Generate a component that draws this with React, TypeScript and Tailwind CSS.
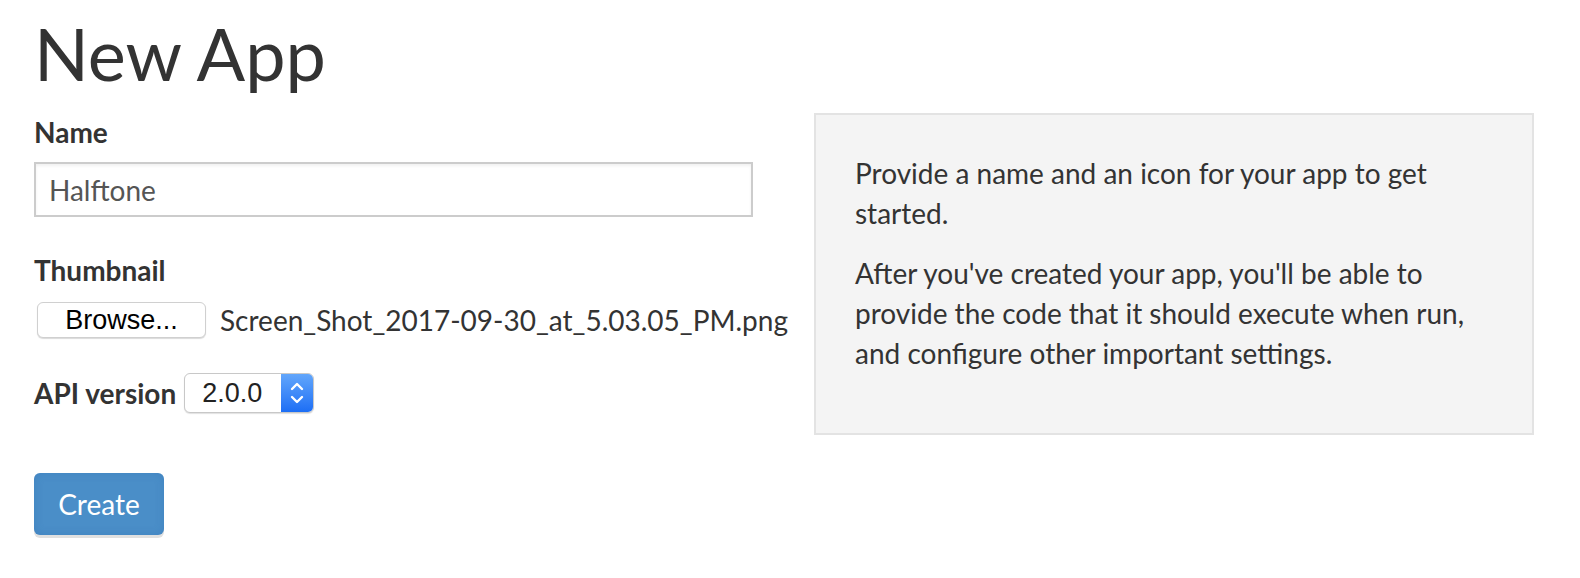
import React from "react";

export default function App() {
  return (
    <div className="min-h-[578px] bg-white pl-[34px] pt-[14px] font-['Lato','Noto_Sans',sans-serif] text-[#333]">
      <h1 className="text-[72px] leading-[79px] font-normal mb-[19px] text-[#333]">New App</h1>
      <div className="flex gap-[60px]">
        <div className="w-[720px] shrink-0 flex flex-col">
          <label className="block text-[28px] leading-[40px] font-bold mb-[10px]">Name</label>
          <div className="w-[719px] h-[55px] border-2 border-[#cccccc] flex items-center px-[13px] text-[28px] text-[#555] shadow-[inset_0_2px_3px_rgba(0,0,0,0.06)]">
            Halftone
          </div>
          <label className="block text-[28px] leading-[40px] font-bold mt-[33px] mb-[10px]">Thumbnail</label>
          <div className="flex items-center h-[40px]">
            <div className="shrink-0 ml-[3px] w-[169px] h-[36px] rounded-[6px] border border-[#d0d0d0] bg-white shadow-[0_1px_1px_rgba(0,0,0,0.15)] flex items-center justify-center font-['Liberation_Sans',Arial,sans-serif] text-[27px] text-black">
              Browse...
            </div>
            <span className="shrink-0 whitespace-nowrap ml-[14px] text-[28px] leading-[40px] text-[#333]">Screen_Shot_2017-09-30_at_5.03.05_PM.png</span>
          </div>
          <div className="flex items-center mt-[33px] h-[40px]">
            <label className="text-[28px] leading-[40px] font-bold mr-[8px]">API version</label>
            <div className="flex w-[130px] h-[40px] rounded-[6px] border border-[#c8c8c8] bg-white shadow-[0_1px_1px_rgba(0,0,0,0.12)] overflow-hidden">
              <div className="flex-1 flex items-center pl-[17px] font-['Liberation_Sans',Arial,sans-serif] text-[27px] text-[#222]">2.0.0</div>
              <div className="w-[32px] h-full bg-gradient-to-b from-[#62a6fb] to-[#1c6ef5] flex items-center justify-center">
                <svg width="16" height="26" viewBox="0 0 16 26" fill="none" stroke="white" strokeWidth="2.4" strokeLinecap="round" strokeLinejoin="round">
                  <path d="M3 9 L8 4 L13 9" />
                  <path d="M3 17 L8 22 L13 17" />
                </svg>
              </div>
            </div>
          </div>
          <div className="mt-[60px]">
            <div className="w-[130px] h-[62px] rounded-[6px] bg-[#4a8ec8] shadow-[0_3px_0_#e0e0e0,inset_0_0_8px_rgba(40,100,170,0.25)] flex items-center justify-center text-white text-[28px]">
              Create
            </div>
          </div>
        </div>
        <div className="w-[720px] self-start mt-[1px] border-2 border-[#e3e3e3] bg-[#f4f4f4] px-[39px] pt-[38px] pb-[40px] text-[28px] leading-[40px] text-[#333]">
          <p className="mb-[20px]">Provide a name and an icon for your app to get started.</p>
          <p className="mb-[20px]">After you've created your app, you'll be able to provide the code that it should execute when run, and configure other important settings.</p>
        </div>
      </div>
    </div>
  );
}
